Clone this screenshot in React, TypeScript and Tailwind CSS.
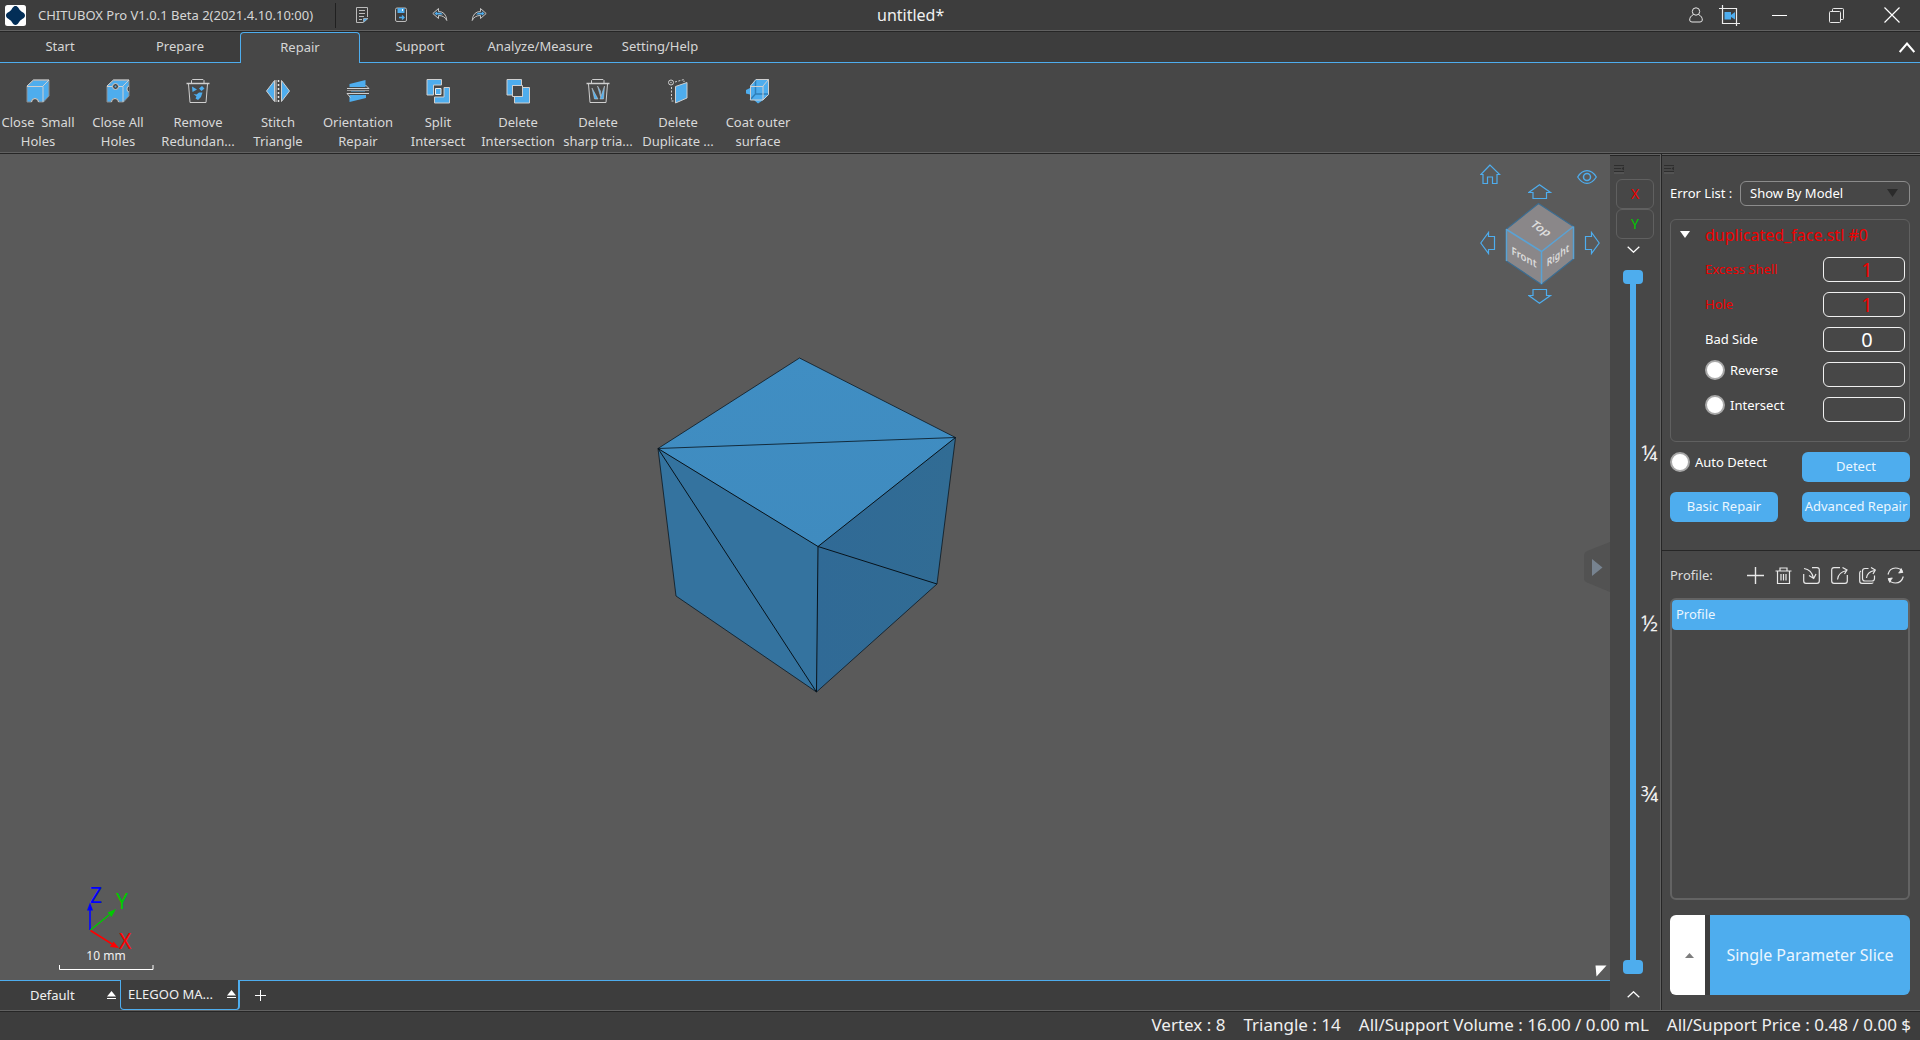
import React, { useState } from 'react';
import type { ReactNode } from 'react';

const BLUE = '#4eadee';
const EDGE = '#cfcfcf';

type IconProps = { children: ReactNode; w?: number; h?: number; box?: string; className?: string };

function Svg({ children, w = 24, h = 24, box, className = '' }: IconProps) {
  return (
    <svg width={w} height={h} viewBox={box ?? `0 0 ${w} ${h}`} fill="none" aria-hidden="true" className={`block shrink-0 ${className}`}>
      {children}
    </svg>
  );
}

function Rule() {
  return <div className="h-0.5 shrink-0 border-t border-b border-t-[#616161] border-b-[#262626]" />;
}

function TrashBody() {
  return (
    <g stroke={EDGE}>
      <path d="M5.5 4V1.5L6.5.5H17L18 1.5V4M2.5 5L4 23.5H20L21.5 5" />
      <path d="M.5 4.5H23.5" strokeWidth="1.5" />
    </g>
  );
}

const ribbon: { lines: [string, string]; icon: ReactNode }[] = [
  {
    lines: ['Close\u00a0 Small', 'Holes'],
    icon: (
      <>
        <path d="M1 7L7.5 1H23V17L17.5 23H12.5A3.5 3.5 0 0 0 5.5 23H1Z" fill={BLUE} stroke="#8d8d8d" />
        <path d="M1 7L7.5 1H23L17 7M1 7.500H17V23M5.5 23a3.500 3.500 0 0 1 7 0" stroke={EDGE} />
      </>
    ),
  },
  {
    lines: ['Close All', 'Holes'],
    icon: (
      <>
        <path d="M1 7L7.500 1H23V17L17.500 23H12.500A3.500 3.500 0 0 0 5.500 23H1Z" fill={BLUE} stroke="#8d8d8d" />
        <path d="M1 7L7.5 1H23L17 7M1 7.5H6M13 7.5H17V23" stroke={EDGE} />
        <circle cx="9.500" cy="7.500" r="3" fill="#474747" stroke={EDGE} />
        <circle cx="9.500" cy="7.500" r="1" fill={BLUE} />
        <path d="M5.500 23a3.500 3.500 0 0 1 7 0M23 7a2 3 0 1 0 0 6" fill="#474747" stroke={EDGE} />
      </>
    ),
  },
  {
    lines: ['Remove', 'Redundan...'],
    icon: (
      <>
        <TrashBody />
        <path d="M6 7.500L11 10.500L6.500 13ZM16 7L18.500 9.500L15.500 12L13 9.500ZM7.500 15L10.500 15.500L13 13.500H16.500L15 18L12 21L9.500 19.500L10.500 17.500Z" fill={BLUE} />
      </>
    ),
  },
  {
    lines: ['Stitch', 'Triangle'],
    icon: (
      <>
        <path d="M.5 12L8.500 1.500V22.500ZM23.500 12L15.500 1.500V22.500Z" fill={BLUE} stroke={EDGE} />
        <path d="M10 1V23" stroke={EDGE} />
        <path d="M12.500 1V23" stroke="#e5e5e5" strokeWidth="1.500" strokeDasharray="2 2" />
      </>
    ),
  },
  {
    lines: ['Orientation', 'Repair'],
    icon: (
      <>
        <path d="M3.500 5L19.500 1V8H3.500ZM3.500 16H20V19L3.500 23Z" fill={BLUE} />
        <path d="M5 11.500H19V12.500H5Z" fill={BLUE} />
        <path d="M1 9.500H23L19.500 6M23 14.500H1L4.500 18.500" stroke={EDGE} />
        <path d="M1 11.500H23" stroke="#999" />
      </>
    ),
  },
  {
    lines: ['Split', 'Intersect'],
    icon: (
      <>
        <path d="M1 .5H15.500V6H7.500V16H1Z" fill={BLUE} stroke={EDGE} />
        <path d="M23.500 8.500H18V18H8.500V24H23.500Z" fill={BLUE} stroke={EDGE} />
        <path d="M9.500 9.500H15V15.500H9.500Z" fill={BLUE} stroke="#eee" />
      </>
    ),
  },
  {
    lines: ['Delete', 'Intersection'],
    icon: (
      <>
        <path d="M1 .5H15.500V6.500H6.500V16H1Z" fill={BLUE} stroke={EDGE} />
        <path d="M23.500 8.500H16.500V17.500H8.500V24H23.500Z" fill={BLUE} stroke={EDGE} />
        <path d="M6.500 6.500H16.500V17.500H6.500Z" stroke={EDGE} />
      </>
    ),
  },
  {
    lines: ['Delete', 'sharp tria...'],
    icon: (
      <>
        <TrashBody />
        <path d="M6 9L12 20H8.500ZM11.500 7L14.500 12V17.500ZM18.500 7L17.500 20H14Z" fill={BLUE} stroke={EDGE} strokeWidth=".5" />
      </>
    ),
  },
  {
    lines: ['Delete', 'Duplicate ...'],
    icon: (
      <>
        <path d="M9.500 7.500L21 3.500V19L9.500 24Z" fill={BLUE} stroke={EDGE} />
        <circle cx="5" cy="3.500" r="2.500" stroke={EDGE} />
        <circle cx="5" cy="3.500" r=".7" fill={EDGE} />
        <path d="M5.500 8V22H9M9 3L18 .500V3" stroke={EDGE} strokeDasharray="2 1.500" />
      </>
    ),
  },
  {
    lines: ['Coat outer', 'surface'],
    icon: (
      <>
        <path d="M4 7L9.500 .500H22.500V16L16.500 21.500L12 24.500L8 21H4V15.500L0 14.500V11L4 9Z" fill={BLUE} />
        <path d="M9.500 1V15L4 21M9.500 15H22" stroke="#2f7fb8" strokeWidth="1.500" />
        <path d="M4.500 7L10 .500H22.500V15.500L17 21H4.500ZM4.500 7.500H17M17 21V7L22.500 .500" stroke={EDGE} />
      </>
    ),
  },
];

function TitleBar() {
  return (
    <header className="relative flex h-[30px] shrink-0 items-center justify-between">
      <div className="flex h-full items-center pl-[5px]">
        <Svg w={21} h={21}>
          <rect width="21" height="21" rx="2.500" fill="#fff" />
          <path d="M10.500 1C13 1 13.500 3.500 15 5.200C16.500 7 20 7.500 20 10.500C20 13.500 16.500 14 15 15.800C13.500 17.500 13 20 10.500 20C8 20 7.500 17.500 6 15.800C4.500 14 1 13.500 1 10.500C1 7.500 4.500 7 6 5.200C7.500 3.500 8 1 10.500 1Z" fill="#032e57" />
        </Svg>
        <span className="ml-3 w-[297px] whitespace-nowrap text-[13px] leading-5 text-[#d6d6d6]">CHITUBOX Pro V1.0.1 Beta 2(2021.4.10.10:00)</span>
        <span className="h-[25px] w-px bg-[#202020]" />
        <div className="ml-[18px] flex items-center gap-[23px]">
          <button aria-label="New">
            <Svg w={16} h={16}>
              <path d="M13.500 10V.500H2.500V15.500H9" stroke="#bbb" />
              <path d="M5 3.500H11M5 6.500H11M5 9.500H10M5 12.500H8" stroke="#bbb" />
              <path d="M9.500 15.500V11.500H14Z" fill={BLUE} stroke={EDGE} strokeWidth=".6" />
            </Svg>
          </button>
          <button aria-label="Save">
            <Svg w={16} h={16}>
              <rect x="2.500" y="1" width="11" height="13.500" rx="1.500" stroke="#bbb" />
              <rect x="4.500" y="1" width="7" height="5" fill={BLUE} />
              <path d="M9.500 2V4" stroke="#fff" />
              <path d="M6 10.500H11M9 8.500L11 10.500L9 12.500" stroke={BLUE} strokeWidth="1.300" />
            </Svg>
          </button>
          <button aria-label="Undo">
            <Svg w={16} h={16}>
              <path d="M.8 6.500L6.500 1.500V4.500Q14 4.500 14.800 13.500Q12.500 8.500 6.500 8.500V11.500Z" stroke="#c4c4c4" />
              <path d="M2.500 6.500L5 4.500V5.800H9L11 7.500H5V8.500Z" fill={BLUE} />
            </Svg>
          </button>
          <button aria-label="Redo">
            <Svg w={16} h={16}>
              <path d="M15.200 6.500L9.500 1.500V4.500Q2 4.500 1.200 13.500Q3.500 8.500 9.500 8.500V11.500Z" stroke="#c4c4c4" />
              <path d="M13.500 6.500L11 4.500V5.800H7L5 7.500H11V8.500Z" fill={BLUE} />
            </Svg>
          </button>
        </div>
      </div>
      <h1 className="absolute left-1/2 top-[3px] -translate-x-[83px] text-base leading-6 text-[#f0f0f0]">untitled*</h1>
      <div className="flex h-full items-center pr-5 text-white">
        <button aria-label="Account" className="mr-4">
          <Svg w={14} h={16}>
            <circle cx="7" cy="4.500" r="3.700" stroke="#e8e8e8" />
            <path d="M4.500 7.500C1.500 9 .7 11 .7 13Q.7 15 3 15H11Q13.300 15 13.300 13C13.300 11 12.500 9 9.500 7.500" stroke="#e8e8e8" />
          </Svg>
        </button>
        <button aria-label="Record" className="mr-8">
          <Svg w={21} h={21}>
            <path d="M3.500 0V18.500H21M0 3.500H17.500V21" stroke="#eee" strokeWidth="1.200" />
            <rect x="5.500" y="7" width="6.500" height="7.500" fill={BLUE} />
            <path d="M12 10L16 7V14.500L12 12Z" fill={BLUE} />
          </Svg>
        </button>
        <button aria-label="Minimize" className="mr-[42px]">
          <Svg w={15} h={15}><path d="M0 7.500H15" stroke="#fff" /></Svg>
        </button>
        <button aria-label="Restore" className="mr-10">
          <Svg w={15} h={15}>
            <rect x=".5" y="3.500" width="11" height="11" rx="1" stroke="#e8e8e8" />
            <path d="M3.500 3V1.500Q3.500 .500 4.500 .500H13.500Q14.500 .500 14.500 1.500V10.500Q14.500 11.500 13.500 11.500H12" stroke="#e8e8e8" />
          </Svg>
        </button>
        <button aria-label="Close">
          <Svg w={16} h={16}><path d="M.5 .5L15.500 15.500M15.500 .5L.5 15.500" stroke="#fff" strokeWidth="1.200" /></Svg>
        </button>
      </div>
    </header>
  );
}

function Tabs() {
  const tabs = ['Start', 'Prepare', 'Repair', 'Support', 'Analyze/Measure', 'Setting/Help'];
  return (
    <nav className="flex h-[31px] shrink-0 text-[13px] text-[#d6d6d6]">
      {tabs.map((t) => (
        <button
          key={t}
          className={
            t === 'Repair'
              ? 'w-30 rounded-t border border-b-0 border-[#4eadee] bg-[#474747]'
              : 'w-30 border-b border-[#4eadee]'
          }
        >
          {t}
        </button>
      ))}
      <div className="flex flex-1 items-center justify-end border-b border-[#4eadee] pr-[5px]">
        <button aria-label="Collapse ribbon">
          <Svg w={16} h={11}><path d="M.700 10L8 1.500L15.300 10" stroke="#fff" strokeWidth="2" /></Svg>
        </button>
      </div>
    </nav>
  );
}

function Ribbon() {
  return (
    <div className="flex h-[89px] shrink-0 gap-1 bg-[#474747]">
      {ribbon.map((r) => (
        <button key={r.lines.join()} className="flex w-[76px] flex-col items-center pt-4 text-[13px] leading-[19px] text-[#d9d9d9]">
          <Svg w={24} h={25} className="mb-[9px]">{r.icon}</Svg>
          <span className="whitespace-nowrap">{r.lines[0]}</span>
          <span className="whitespace-nowrap">{r.lines[1]}</span>
        </button>
      ))}
    </div>
  );
}

function ModelCube() {
  return (
    <svg width="310" height="424" viewBox="650 355 310 424" role="img" aria-label="Model">
      <defs>
        <linearGradient id="topFace" x1="0" y1="0" x2="0" y2="1">
          <stop offset="0" stopColor="#408ec3" />
          <stop offset="1" stopColor="#3f8bbf" />
        </linearGradient>
        <linearGradient id="rightFace" x1="0" y1="0" x2="1" y2="0">
          <stop offset="0" stopColor="#306a96" />
          <stop offset="1" stopColor="#316c94" />
        </linearGradient>
      </defs>
      <path d="M799.500 358L658 448.500L818 546.500L955.500 437.500Z" fill="url(#topFace)" />
      <path d="M658 448.500L818 546.500L816.500 692L676 596Z" fill="#34739f" />
      <path d="M818 546.500L955.500 437.500L937 584L816.500 692Z" fill="url(#rightFace)" />
      <g fill="none" stroke="#07131c" strokeLinejoin="round">
        <path d="M799.500 358L658 448.500L676 596L816.500 692L937 584L955.500 437.500Z" opacity=".75" />
        <path d="M658 448.500L818 546.500L955.500 437.500M818 546.500L816.500 692" />
        <path d="M658 448.500L955.500 437.500" opacity=".8" />
        <path d="M658 448.500L816.500 692M818 546.500L937 584" />
      </g>
    </svg>
  );
}

function ViewGizmo() {
  return (
    <div className="absolute right-2.5 top-2.5 h-[140px] w-30">
      <svg width="120" height="140" viewBox="1480 164 120 140" fill="none" role="img" aria-label="View orientation" className="absolute inset-0">
        <g stroke={BLUE} strokeWidth="1.200">
          <path d="M1538.500 203.500L1573.500 226.500V259L1541.500 284.500L1506.500 261V229Z" fill="#8a8789" stroke="#3b6d92" />
          <path d="M1506.500 229.500L1541.500 251.500L1573.500 226.500M1541.500 251.500V284M1506.500 229V261M1573.500 226.500V259" stroke="#5aa2d4" strokeWidth="1.500" />
        </g>
        <g fill="#dcdcdc" fontFamily="'Noto Sans', sans-serif" fontWeight="600" fontSize="12" textAnchor="middle">
          <text transform="matrix(.85 .56 -.75 .6 1538 231)">Top</text>
          <text transform="matrix(.8 .45 0 .9 1524 261)">Front</text>
          <text transform="matrix(.72 -.52 0 .9 1558 259)">Right</text>
        </g>
      </svg>
      <button aria-label="Home view" className="absolute left-0 top-0">
        <Svg w={21} h={21}><path d="M10 1L.800 10.500H3V19.500H7.500V13H12.500V19.500H17V10.500H19.700Z" stroke={BLUE} strokeWidth="1.200" /></Svg>
      </button>
      <button aria-label="Visibility" className="absolute right-[3px] top-1.5">
        <Svg w={20} h={14}>
          <path d="M.700 7Q4.500 .700 10 .700T19.300 7Q15.500 13.300 10 13.300T.700 7Z" stroke={BLUE} strokeWidth="1.200" />
          <circle cx="10" cy="7" r="3.500" stroke={BLUE} strokeWidth="1.500" />
        </Svg>
      </button>
      <button aria-label="Rotate up" className="absolute left-12 top-5">
        <Svg w={24} h={16}><path d="M11.500 .800L.800 8.500H5V14.500H18.500V8.500H22.500Z" stroke={BLUE} strokeWidth="1.200" /></Svg>
      </button>
      <button aria-label="Rotate down" className="absolute bottom-0 left-12">
        <Svg w={24} h={16}><path d="M11.500 15.200L.800 7.500H5V1.500H18.500V7.500H22.500Z" stroke={BLUE} strokeWidth="1.200" /></Svg>
      </button>
      <button aria-label="Rotate left" className="absolute left-0 top-[67px]">
        <Svg w={16} h={24}><path d="M.800 12L8.500 1.500V5.500H14.500V18.500H8.500V22.500Z" stroke={BLUE} strokeWidth="1.200" /></Svg>
      </button>
      <button aria-label="Rotate right" className="absolute right-0 top-[67px]">
        <Svg w={16} h={24}><path d="M15.200 12L7.500 1.500V5.500H1.500V18.500H7.500V22.500Z" stroke={BLUE} strokeWidth="1.200" /></Svg>
      </button>
    </div>
  );
}

function Viewport() {
  return (
    <main className="relative flex min-h-0 flex-1 items-center justify-center overflow-hidden bg-[#5a5a5a]">
      <ModelCube />
      <ViewGizmo />
      <svg width="110" height="100" viewBox="50 880 110 100" role="img" aria-label="Axes and scale" className="absolute bottom-0 left-[50px]">
        <g strokeWidth="1.600">
          <path d="M90 930V908" stroke="#1414e6" strokeWidth="2" />
          <path d="M90 902.500L93 910.500H87Z" fill="#00f" />
          <path d="M90.500 930L109 915" stroke="#00c800" />
          <path d="M116 909L111.500 917L107.500 912.500Z" fill="#00c800" />
          <path d="M90.500 930.500L112 944" stroke="#f00" />
          <path d="M119 948L110 947L113.500 941.500Z" fill="#f00" />
        </g>
        <g fontFamily="'Noto Sans', sans-serif" fontSize="21">
          <text x="90" y="903" fill="#00f">Z</text>
          <text x="116" y="909" fill="#00c800">Y</text>
          <text x="119" y="949" fill="#f00">X</text>
          <text x="106" y="960" fontSize="12" fill="#f0f0f0" textAnchor="middle">10 mm</text>
        </g>
        <path d="M59.500 965V969.500H153V965" stroke="#fff" fill="none" />
      </svg>
      <button aria-label="Expand panel" className="absolute right-0 top-[388px]">
        <Svg w={27} h={50}>
          <path d="M27 0L4 9Q1 10.500 1 13V37Q1 39 4 40.500L27 50Z" fill="#525252" />
          <path d="M9 17L19.500 25.500L9 34Z" fill="#778390" />
        </Svg>
      </button>
      <Svg w={12} h={12} className="absolute bottom-[3px] right-[3px]"><path d="M.500 .500H11.500L1.500 11.500Z" fill="#fff" /></Svg>
    </main>
  );
}

function Eject() {
  return (
    <Svg w={9} h={9}>
      <path d="M4.500 0L9 5.500H0Z" fill="#fff" />
      <path d="M0 7.500H9" stroke="#fff" />
    </Svg>
  );
}

function MachineTabs() {
  return (
    <div className="flex h-[30px] shrink-0 text-[13px] text-[#f0f0f0]">
      <button className="flex w-30 items-center justify-between border-t border-[#4eadee] pl-[30px] pr-1">
        Default
        <Eject />
      </button>
      <button className="flex w-30 items-center justify-between rounded-b border border-r-2 border-t-0 border-[#4eadee] pl-[7px] pr-0.5">
        ELEGOO MA...
        <Eject />
      </button>
      <div className="flex flex-1 items-center border-t border-[#4eadee] pl-[15px]">
        <button aria-label="Add machine">
          <Svg w={11} h={11}><path d="M0 5.500H11M5.500 0V11" stroke="#fff" /></Svg>
        </button>
      </div>
    </div>
  );
}

function Grip() {
  return (
    <Svg w={10} h={10}>
      <path d="M0 1.500H10M0 4.500H7M0 7.500H10" stroke="#2e2e2e" />
      <path d="M10 2.500V6.500L7.500 4.500Z" fill="#2e2e2e" />
      <path d="M0 9H10" stroke="#606060" />
    </Svg>
  );
}

const thumb =
  'pointer-events-none absolute inset-0 m-0 h-full w-5 appearance-none bg-transparent [writing-mode:vertical-lr] [&::-webkit-slider-thumb]:pointer-events-auto [&::-webkit-slider-thumb]:h-3.5 [&::-webkit-slider-thumb]:w-5 [&::-webkit-slider-thumb]:appearance-none [&::-webkit-slider-thumb]:rounded [&::-webkit-slider-thumb]:bg-[#4eadee]';

function LayerColumn() {
  const [range, setRange] = useState([0, 100]);
  return (
    <aside className="flex w-[51px] shrink-0 flex-col bg-[#474747]">
      <Rule />
      <div className="pl-1 pt-2"><Grip /></div>
      <div className="mt-[5px] flex flex-col items-center pr-px text-sm">
        <button className="h-[30px] w-[38px] rounded-md border border-[#606060] text-[#f00000]">X</button>
        <button className="h-[30px] w-[38px] rounded-md border border-[#606060] text-[#00c800]">Y</button>
      </div>
      <button aria-label="Layer down" className="mt-[7px] self-center pr-[5px]">
        <Svg w={13} h={7}><path d="M.700 .700L6.500 6.200L12.300 .700" stroke="#fff" strokeWidth="1.300" /></Svg>
      </button>
      <div className="mt-[17px] flex min-h-0 flex-1 pl-[13px]">
        <div className="relative flex w-5 justify-center">
          <span className="my-2 w-1.5 bg-[#4eadee]" />
          <input type="range" aria-label="Top layer" className={thumb} value={range[0]} onChange={(e) => setRange([+e.target.value, range[1]])} />
          <input type="range" aria-label="Bottom layer" className={thumb} value={range[1]} onChange={(e) => setRange([range[0], +e.target.value])} />
        </div>
        <div className="-ml-0.5 flex flex-col justify-evenly py-[22px] text-[22px] leading-none text-[#f0f0f0]">
          <span>¼</span>
          <span>½</span>
          <span>¾</span>
        </div>
      </div>
      <button aria-label="Layer up" className="mb-3 mt-[17px] self-center pr-[5px]">
        <Svg w={13} h={7}><path d="M.700 6.300L6.500 .800L12.300 6.300" stroke="#fff" strokeWidth="1.300" /></Svg>
      </button>
    </aside>
  );
}

function Radio({ label }: { label: string }) {
  return (
    <label className="flex items-center gap-[5px] whitespace-nowrap leading-5">
      <input type="radio" className="size-5 shrink-0 appearance-none rounded-full border-2 border-[#a8a8a8] bg-white" />
      {label}
    </label>
  );
}

function ErrorRow({ label, value, red, radio }: { label: string; value: string; red?: boolean; radio?: boolean }) {
  const id = label.replace(' ', '-').toLowerCase();
  return (
    <div className={red ? 'flex h-[25px] items-center justify-between text-[#f00000]' : 'flex h-[25px] items-center justify-between text-white'}>
      {radio ? <div className="mb-2.5"><Radio label={label} /></div> : <label htmlFor={id}>{label}</label>}
      <input id={id} aria-label={label} defaultValue={value} className="h-full w-[82px] rounded-md border border-[#f0f0f0] pl-1.5 text-center text-xl leading-none outline-none" />
    </div>
  );
}

const profileIcons: { name: string; icon: ReactNode }[] = [
  { name: 'Add profile', icon: <path d="M0 8.500H17M8.500 0V17" strokeWidth="1.400" /> },
  { name: 'Delete profile', icon: <path d="M.5 4H16.500M5 4V1H12V4M2.500 4.500V16.500H14.500V4.500M6 7V13.500M8.500 7V13.500M11 7V13.500" /> },
  { name: 'Import profile', icon: <path d="M.700 7V14Q.700 16.300 3 16.300H14Q16.300 16.300 16.300 14V3Q16.300 .700 14 .700H9M1 1.500Q8.500 2.500 10.500 11M6 8.500L10.700 11.500L13 7" /> },
  { name: 'Export profile', icon: <path d="M9 .700H3Q.700 .700 .700 3V14Q.700 16.300 3 16.300H14Q16.300 16.300 16.300 14V8M6.500 12.500Q7 5.500 15.500 3.500M11.500 .500L16 3L13.500 7" /> },
  { name: 'Export all profiles', icon: <path d="M9.500 1.500H6Q3.500 1.500 3.500 4V11.500Q3.500 14 6 14H13Q15.500 14 15.500 11.500V8.500M2 4Q.700 4.500 .700 6V14Q.700 16.300 3 16.300H12.500Q14 16.300 14 15.500M7.500 11Q8 5 15.500 3.500M12 .500L16.300 3L14 7" /> },
  { name: 'Refresh', icon: <><path d="M1 7.500Q2.500 1 8.500 1Q13 1 15.500 4.500M16.300 9.500Q14.500 16 8.500 16Q4 16 1.500 12.500" /><path d="M14 1.500L15.500 5.200L11.500 6M3 15.500L1.500 11.800L5.500 11" fill="#e8e8e8" /></> },
];

const primary = 'h-[30px] w-[108px] whitespace-nowrap rounded-md bg-[#4eadee] text-[13px] text-[#eaf6ff]';

function SidePanel() {
  return (
    <aside className="flex w-[259px] shrink-0 flex-col border-l border-[#262626] bg-[#474747] text-[13px] text-white shadow-[-1px_0_0_#616161]">
      <Rule />
      <div className="pl-0.5 pt-2"><Grip /></div>
      <section className="flex flex-col pb-7 pl-2 pr-2.5 pt-[7px]">
        <div className="flex h-[25px] items-center justify-between">
          <label htmlFor="errors" className="whitespace-nowrap">Error List :</label>
          <div className="relative h-full w-[170px]">
            <select id="errors" className="h-full w-full appearance-none rounded-md border border-[#8c8c8c] pl-[9px]">
              <option>Show By Model</option>
            </select>
            <Svg w={11} h={8} className="pointer-events-none absolute right-3 top-2"><path d="M0 0H11L5.500 8Z" fill="#2b2b2b" /></Svg>
          </div>
        </div>
        <div className="mt-[13px] flex h-[223px] flex-col rounded-md border border-[#606060] pl-[34px] pr-1">
          <div className="relative mb-[10px] mt-[3px] flex h-6 items-center text-base text-[#f00000]">
            <button aria-label="Collapse" className="absolute -left-[25px] top-2">
              <Svg w={10} h={7}><path d="M0 0H10L5 7Z" fill="#fff" /></Svg>
            </button>
            duplicated_face.stl #0
          </div>
          <div className="flex flex-col gap-2.5">
            <ErrorRow label="Excess Shell" value="1" red />
            <ErrorRow label="Hole" value="1" red />
            <ErrorRow label="Bad Side" value="0" />
            <ErrorRow label="Reverse" value="" radio />
            <ErrorRow label="Intersect" value="" radio />
          </div>
        </div>
        <div className="mt-2.5 flex items-start justify-between">
          <Radio label="Auto Detect" />
          <button className={primary}>Detect</button>
        </div>
        <div className="mt-2.5 flex justify-between">
          <button className={primary}>Basic Repair</button>
          <button className={primary}>Advanced Repair</button>
        </div>
      </section>
      <section className="flex min-h-0 flex-1 flex-col border-t border-[#262626] pb-[15px] pl-2 pr-2.5">
        <div className="flex h-[47px] items-center justify-between pr-1.5 pt-0.5 text-[#dcdcdc]">
          <span>Profile:</span>
          <div className="flex gap-[11px]">
            {profileIcons.map((p) => (
              <button key={p.name} aria-label={p.name}>
                <Svg w={17} h={17}><g stroke="#e8e8e8" strokeWidth="1.200">{p.icon}</g></Svg>
              </button>
            ))}
          </div>
        </div>
        <ul className="min-h-0 flex-1 rounded-md border-2 border-[#636363]">
          <li className="flex h-[30px] items-center rounded bg-[#4eadee] pl-1 text-[#eaf6ff]">Profile</li>
        </ul>
        <div className="mt-[15px] flex h-20">
          <button aria-label="Slice options" className="flex w-[35px] items-center justify-center rounded-l-md bg-white pl-1">
            <Svg w={9} h={5}><path d="M4.500 0L9 5H0Z" fill="#7d7d7d" /></Svg>
          </button>
          <span className="w-[5px] bg-[#3d3d3d]" />
          <button className="flex-1 rounded-r-md bg-[#4eadee] text-base text-[#eaf6ff]">Single Parameter Slice</button>
        </div>
      </section>
    </aside>
  );
}

export default function App() {
  return (
    <div className="flex h-screen flex-col overflow-hidden bg-[#3d3d3d] font-['Noto_Sans',sans-serif]">
      <TitleBar />
      <Rule />
      <Tabs />
      <Ribbon />
      <Rule />
      <div className="flex min-h-0 flex-1">
        <div className="flex min-w-0 flex-1 flex-col">
          <Viewport />
          <MachineTabs />
        </div>
        <LayerColumn />
        <SidePanel />
      </div>
      <Rule />
      <footer className="flex h-7 shrink-0 items-center justify-end gap-[18px] pb-0.5 pr-[9px] text-[17px] text-[#f0f0f0]">
        <span>Vertex : 8</span>
        <span>Triangle : 14</span>
        <span>All/Support Volume : 16.00 / 0.00 mL</span>
        <span>All/Support Price : 0.48 / 0.00 $</span>
      </footer>
    </div>
  );
}
